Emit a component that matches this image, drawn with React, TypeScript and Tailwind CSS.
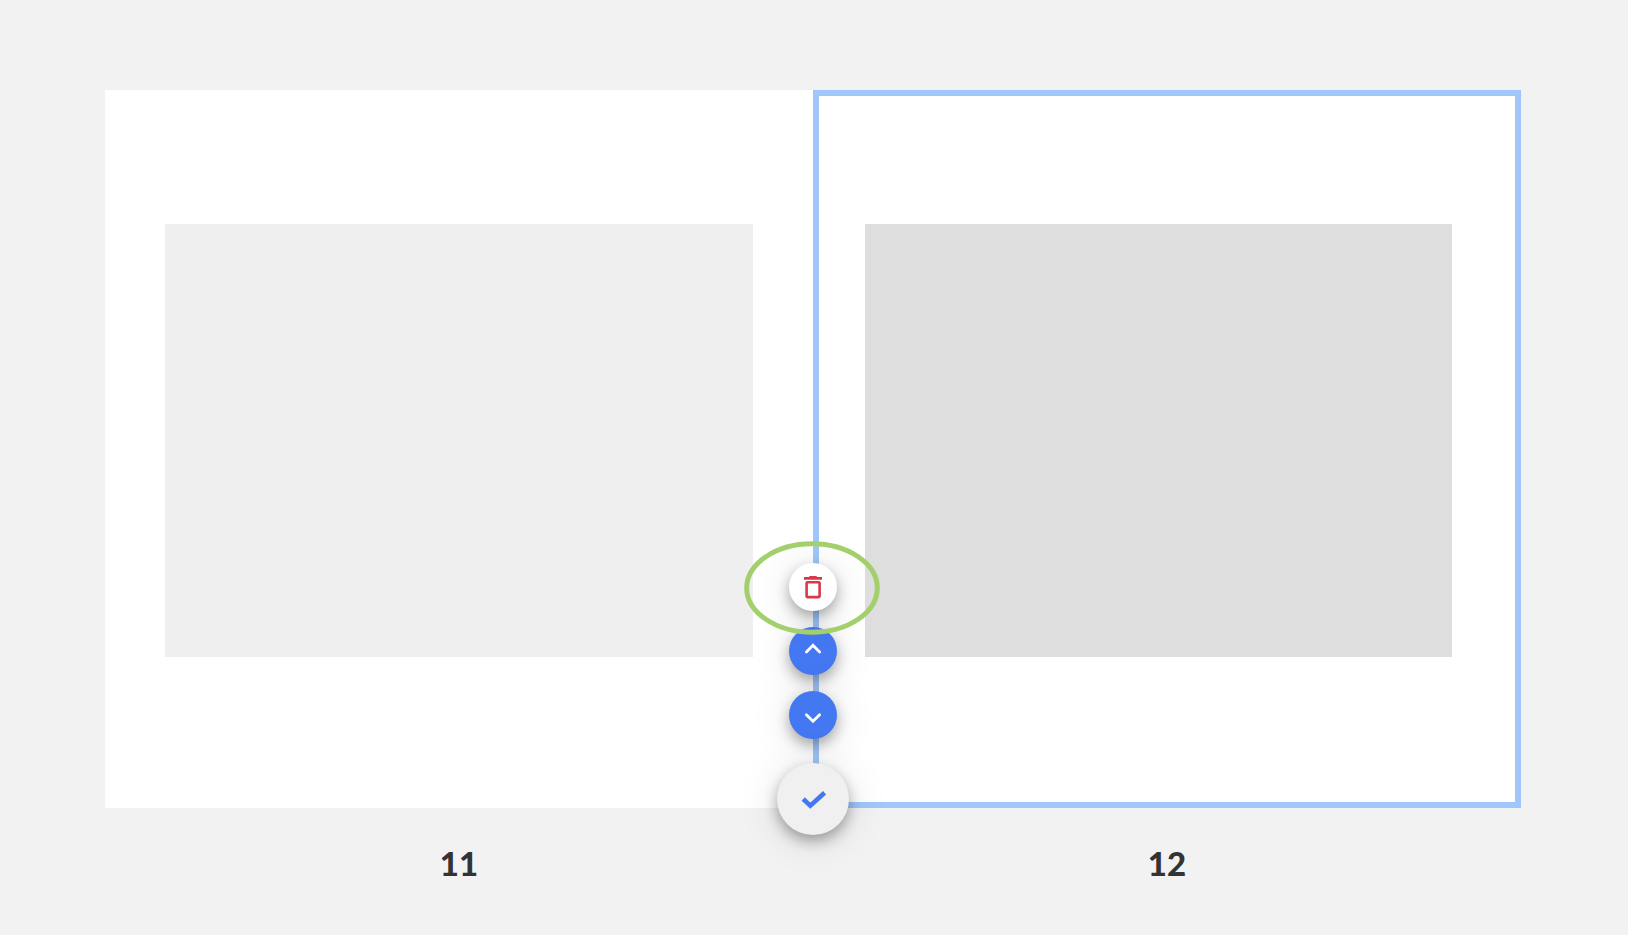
import React from 'react';

interface PageProps {
    number: number;
    selected?: boolean;
}

interface RoundButtonProps {
    label: string;
    className: string;
    children: React.ReactNode;
}

const Page: React.FC<PageProps> = ({ number, selected = false }) => (
    <figure className="flex-1">
        <div
            className={
                selected
                    ? 'bg-white border-6 border-[#9fc7fb] pt-32 pb-[145px] pl-[46px] pr-[63px]'
                    : 'bg-white pt-[134px] pb-[151px] px-[60px]'
            }
        >
            <div className={`w-full ${selected ? 'aspect-[587/433] bg-[#dedede]' : 'aspect-[588/433] bg-[#efefef]'}`} />
        </div>
        <figcaption className="mt-[35px] text-center text-[33px] leading-10 font-black text-[#333333]">{number}</figcaption>
    </figure>
);

const RoundButton: React.FC<RoundButtonProps> = ({ label, className, children }) => (
    <button
        type="button"
        aria-label={label}
        className={`rounded-full cursor-pointer shadow-[0_6px_14px_rgba(0,0,0,0.32),0_4px_44px_rgba(0,0,0,0.12)] ${className}`}
    >
        {children}
    </button>
);

const App: React.FC = () => (
    <main className="min-h-screen bg-[#f2f2f2] pt-[90px] pl-[105px] pr-[107px] font-['Lato',sans-serif]">
        <div className="relative flex">
            <Page number={11} />
            <Page number={12} selected />

            {/* Page actions, centred on the fold */}
            <div className="absolute left-1/2 bottom-12 -translate-x-1/2 flex flex-col items-center gap-4">
                <div className="relative">
                    <RoundButton label="Delete page" className="block size-12 bg-white">
                        <svg className="size-12" viewBox="0 0 48 48" fill="#d93849">
                            <path d="M20.3 13H27.7V14H33V16.8H15V14H20.3Z" />
                            <rect x="17.6" y="19.2" width="13" height="14.9" rx="0.8" fill="none" stroke="#d93849" strokeWidth="2.6" />
                        </svg>
                    </RoundButton>
                    {/* Highlight ring */}
                    <svg
                        className="absolute z-10 left-1/2 top-1/2 w-36 h-24 -translate-x-1/2 -translate-y-1/2 pointer-events-none"
                        viewBox="0 0 144 96"
                        fill="none"
                    >
                        <ellipse cx="71" cy="49" rx="65.3" ry="44.2" stroke="#a3d06c" strokeWidth="5" />
                    </svg>
                </div>
                <RoundButton label="Move page up" className="size-12 bg-[#4477f2]">
                    <svg className="size-12" viewBox="0 0 48 48" fill="none" stroke="#fff" strokeWidth="2.8" strokeLinecap="round">
                        <path d="M17.4 24.9L24 18.3L30.6 24.9" />
                    </svg>
                </RoundButton>
                <RoundButton label="Move page down" className="size-12 bg-[#4477f2]">
                    <svg className="size-12" viewBox="0 0 48 48" fill="none" stroke="#fff" strokeWidth="2.8" strokeLinecap="round">
                        <path d="M17.4 23.7L24 30.3L30.6 23.7" />
                    </svg>
                </RoundButton>
                <RoundButton label="Done" className="mt-2 size-18 bg-[#f0f0f0]">
                    <svg className="size-18" viewBox="0 0 72 72" fill="none" stroke="#4477f2" strokeWidth="4.6">
                        <path d="M26.2 36L33.3 42.6L47.6 29.8" />
                    </svg>
                </RoundButton>
            </div>
        </div>
    </main>
);

export default App;
